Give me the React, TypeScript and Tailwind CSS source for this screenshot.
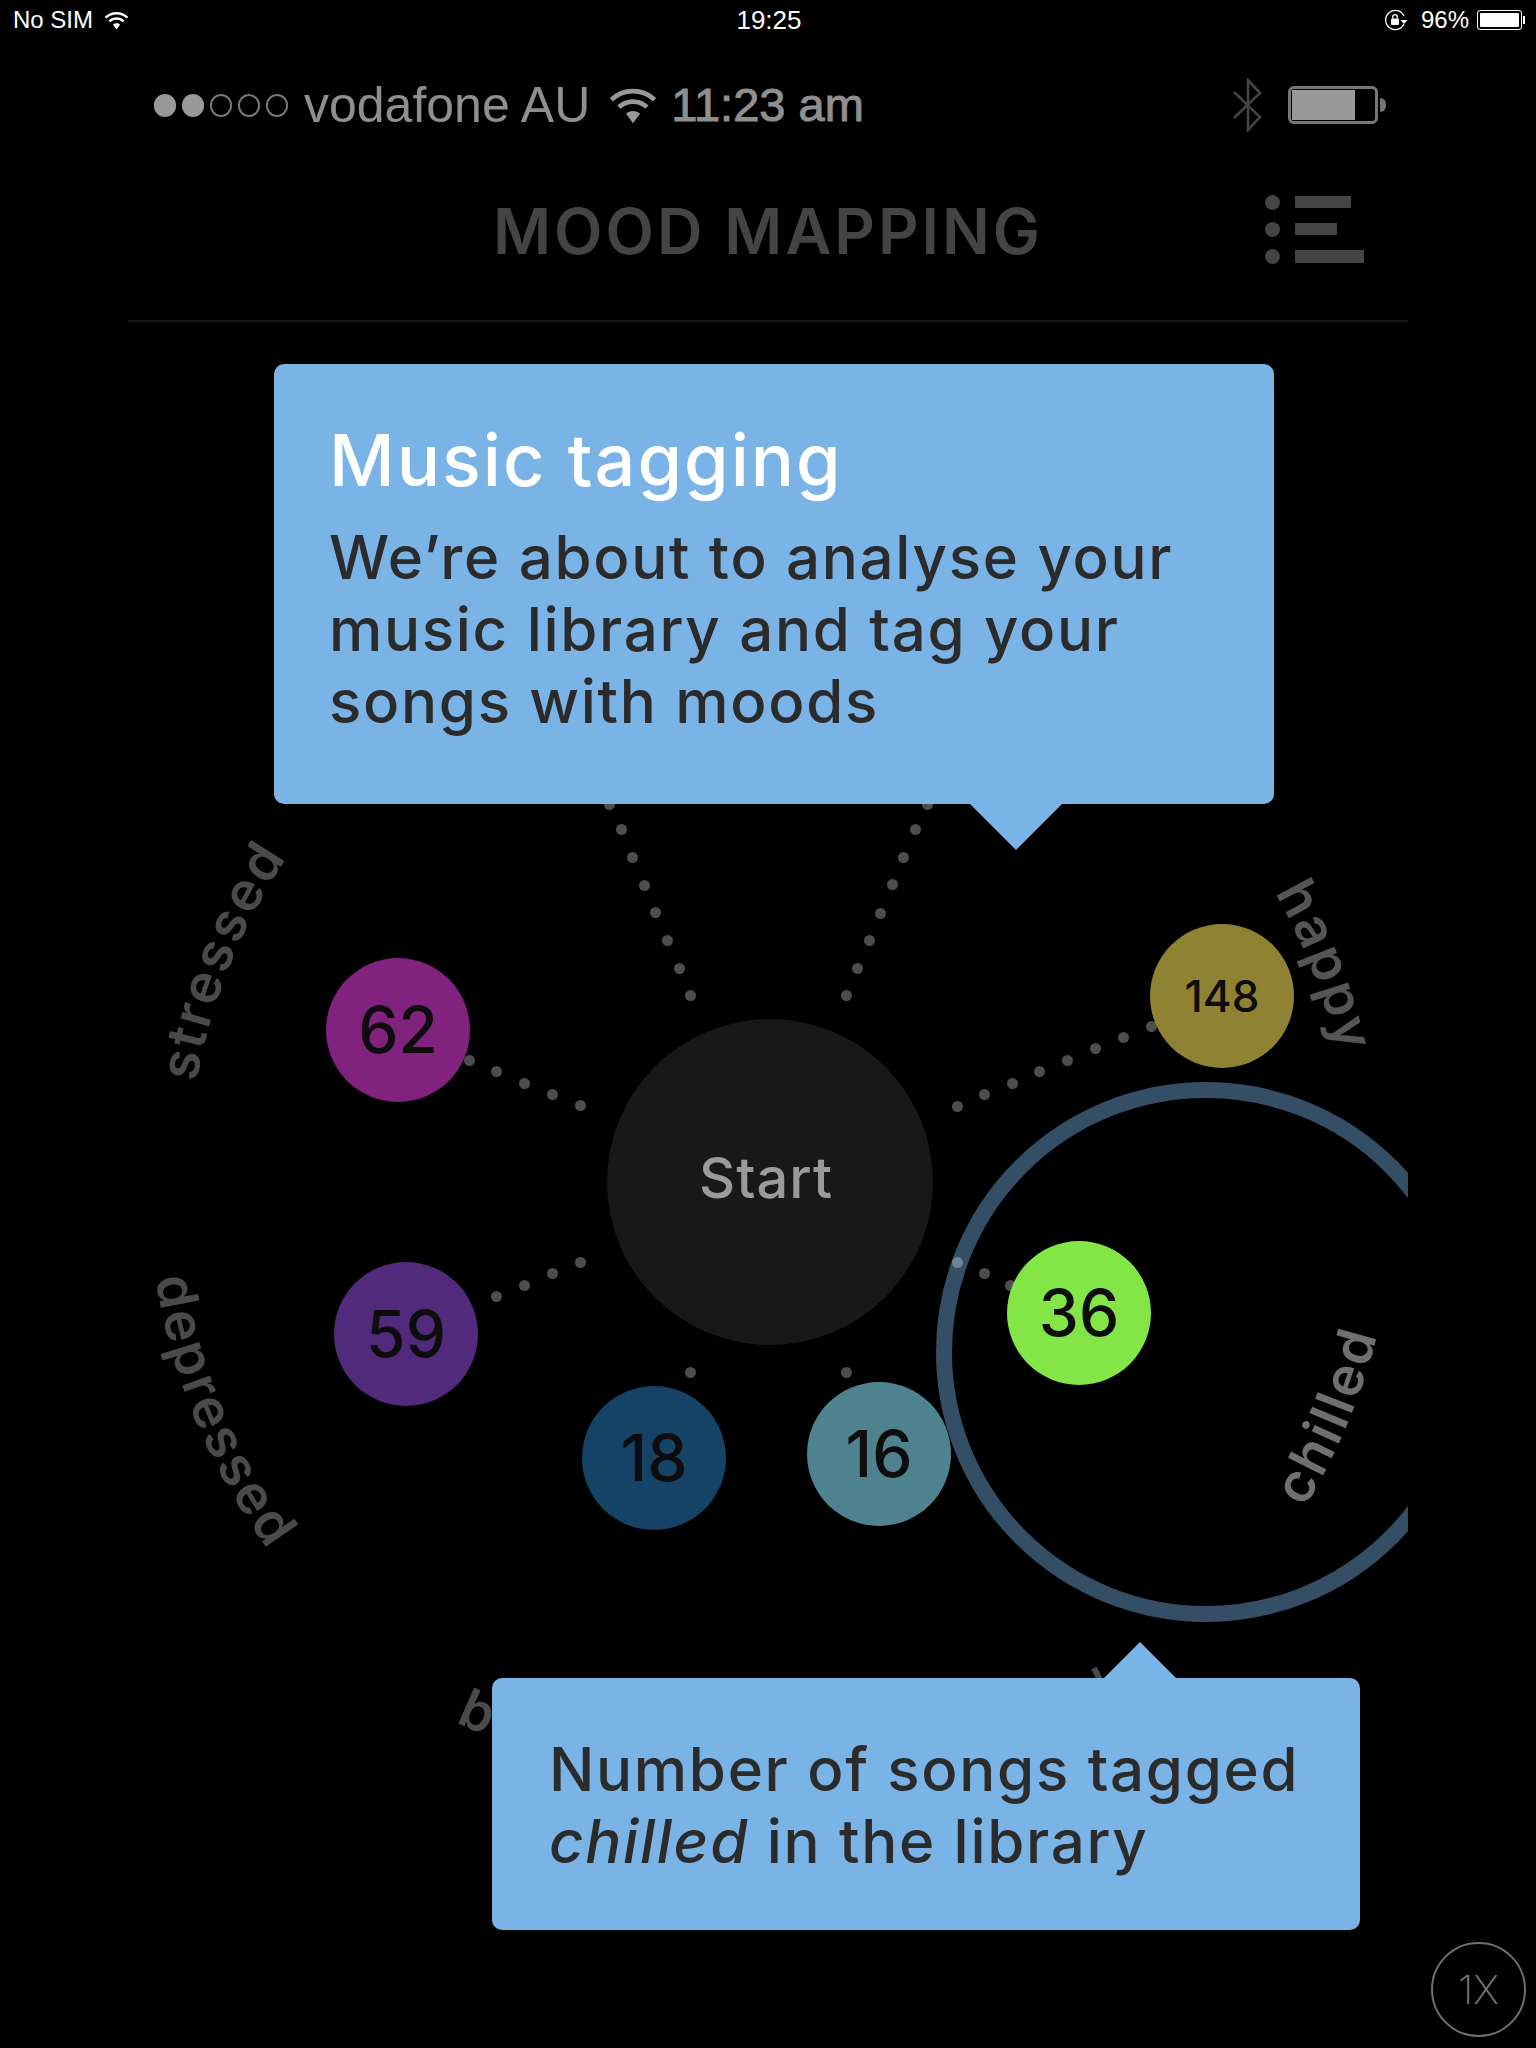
import React from "react";

const OX = 128;
const OY = 322;

const bubbles = [
  { n: "62", x: 398, y: 1030, bg: "#82227f", size: "text-[64px]" },
  { n: "59", x: 406, y: 1334, bg: "#522a7c", size: "text-[64px]" },
  { n: "18", x: 654, y: 1458, bg: "#144366", size: "text-[64px]" },
  { n: "16", x: 879, y: 1454, bg: "#4f828f", size: "text-[64px]" },
  { n: "36", x: 1079, y: 1313, bg: "#83e646", size: "text-[64px]" },
  { n: "148", x: 1222, y: 996, bg: "#8f8233", size: "text-[44px]" },
];

const dots: [number, number][] = [
  [609, 804], [621, 829], [632, 857], [644, 885], [655, 912], [667, 940], [679, 968], [690, 995],
  [469, 1060], [496, 1071], [524, 1083], [552, 1094], [580, 1105],
  [496, 1296], [524, 1285], [552, 1273], [580, 1262],
  [690, 1372], [846, 1372],
  [927, 804], [915, 829], [903, 857], [892, 884], [880, 913], [869, 940], [857, 968], [846, 995],
  [1151, 1026], [1123, 1037], [1095, 1048], [1067, 1060], [1039, 1071], [1012, 1083], [984, 1094], [957, 1106],
  [957, 1262], [984, 1273], [1010, 1285],
];

function Wifi({ className, color }: { className: string; color: string }) {
  return (
    <svg viewBox="0 0 24 18" className={className} fill="none">
      <path d="M1.5 6.2C7.3 0.6 16.7 0.6 22.5 6.2" stroke={color} strokeWidth="2.3" />
      <path d="M5.2 9.8C9 6.2 15 6.2 18.8 9.8" stroke={color} strokeWidth="2.3" />
      <path d="M8.6 13C10.5 11.3 13.5 11.3 15.4 13L12 17.6Z" fill={color} />
    </svg>
  );
}

function Label() {
  const cx = 770 - OX;
  const cy = 1182 - OY;
  const outer = 582;
  const inner = 622;
  const chilled = 626;
  const cw = (r: number) => `M${cx - r} ${cy}A${r} ${r} 0 1 1 ${cx + r} ${cy}A${r} ${r} 0 1 1 ${cx - r} ${cy}`;
  const ccw = (r: number) => `M${cx - r} ${cy}A${r} ${r} 0 1 0 ${cx + r} ${cy}A${r} ${r} 0 1 0 ${cx - r} ${cy}`;
  return (
    <svg className="absolute left-0 top-0 w-[1280px] h-[1726px] font-['Inter',sans-serif] font-semibold text-[54px] tracking-[2.5px]">
      <defs>
        <path id="arc-out" d={cw(outer)} />
        <path id="arc-in" d={ccw(inner)} />
        <path id="arc-chilled" d={ccw(chilled)} />
      </defs>
      <text fill="#4a4a4a" textAnchor="middle">
        <textPath href="#arc-out" startOffset="6.1%">stressed</textPath>
      </text>
      <text fill="#555555" textAnchor="middle">
        <textPath href="#arc-out" startOffset="44.1%">happy</textPath>
      </text>
      <text fill="#4a4a4a" textAnchor="middle">
        <textPath href="#arc-in" startOffset="6.3%">depressed</textPath>
      </text>
      <text fill="#707070" textAnchor="middle">
        <textPath href="#arc-chilled" startOffset="43.7%">chilled</textPath>
      </text>
      <text fill="#4a4a4a" transform={`translate(${455 - OX} ${1722 - OY}) rotate(24)`}>b</text>
      <path d={`M${1094 - OX} ${1668 - OY}L${1100 - OX} ${1680 - OY}`} stroke="#4a4a4a" strokeWidth="6" />
    </svg>
  );
}

export default function App() {
  return (
    <div className="relative w-[1536px] h-[2048px] bg-black overflow-hidden font-['Liberation_Sans',sans-serif]">
      {/* device status bar */}
      <div className="grid grid-cols-3 items-center h-[40px] pl-[13px] pr-[11px] text-white text-[24px]">
        <div className="flex items-center gap-[11px]">
          <span>No SIM</span>
          <Wifi className="w-[25px] h-[19px]" color="#ffffff" />
        </div>
        <div className="text-center text-[26px]">19:25</div>
        <div className="flex items-center justify-end">
          <svg viewBox="0 0 24 22" className="w-[24px] h-[22px] mr-[13px]" fill="none">
            <path d="M20 15A9.6 9.6 0 1 1 20 7" stroke="#fff" strokeWidth="1.3" />
            <path d="M16.5 11h7L20 15Z" fill="#fff" />
            <rect x="7" y="9.5" width="8" height="6.5" rx="1" fill="#fff" />
            <path d="M8.8 9.5V7.8a2.2 2.2 0 0 1 4.4 0V9.5" stroke="#fff" strokeWidth="1.3" />
          </svg>
          <span>96%</span>
          <div className="ml-[8px] w-[45px] h-[20px] rounded-[3px] border border-white p-[2px]">
            <div className="w-full h-full bg-white rounded-[1px]" />
          </div>
          <div className="ml-[1px] w-[2px] h-[8px] bg-white" />
        </div>
      </div>

      {/* app frame */}
      <div className="w-[1280px] ml-[128px]">
        {/* app status bar */}
        <div className="flex items-center h-[130px] pl-[26px] pr-[22px] text-[#8f8f8f]">
          <div className="flex gap-[6px]">
            <div className="w-[22px] h-[23px] rounded-full bg-[#999999]" />
            <div className="w-[22px] h-[23px] rounded-full bg-[#999999]" />
            <div className="w-[22px] h-[23px] rounded-full border-2 border-[#777777]" />
            <div className="w-[22px] h-[23px] rounded-full border-2 border-[#777777]" />
            <div className="w-[22px] h-[23px] rounded-full border-2 border-[#777777]" />
          </div>
          <span className="ml-[16px] text-[50px]">vodafone AU</span>
          <Wifi className="ml-[18px] w-[50px] h-[37px]" color="#999999" />
          <span className="ml-[13px] text-[47px] [-webkit-text-stroke:1px_#8f8f8f]">11:23 am</span>
          <svg viewBox="0 0 30 54" className="ml-auto w-[30px] h-[54px]" fill="none">
            <path d="M1 14L27 39L15 52V2L27 15L1 40" stroke="#444444" strokeWidth="2.6" />
          </svg>
          <div className="ml-[25px] w-[90px] h-[38px] rounded-[6px] border-[3px] border-[#777777] p-[1px]">
            <div className="w-[63px] h-full bg-[#999999]" />
          </div>
          <div className="ml-[2px] w-[6px] h-[14px] rounded-r-full bg-[#777777]" />
        </div>

        {/* title bar */}
        <div className="grid grid-cols-[1fr_auto_1fr] items-center h-[152px] pb-[28px] border-b-2 border-[#1a1a1a]">
          <div />
          <h1 className="text-[63px] leading-none font-semibold tracking-[3px] text-[#444444] font-['Inter',sans-serif] whitespace-nowrap">
            MOOD MAPPING
          </h1>
          <div className="justify-self-end mr-[44px] mb-[4px] grid grid-cols-[15px_69px] gap-x-[15px] gap-y-[12px] items-center">
            <div className="w-[15px] h-[15px] rounded-full bg-[#444444]" />
            <div className="w-[56px] h-[12px] bg-[#444444]" />
            <div className="w-[15px] h-[15px] rounded-full bg-[#444444]" />
            <div className="w-[42px] h-[12px] bg-[#444444]" />
            <div className="w-[15px] h-[15px] rounded-full bg-[#444444]" />
            <div className="w-[69px] h-[13px] bg-[#444444]" />
          </div>
        </div>

        {/* mood map */}
        <div className="relative w-[1280px] h-[1726px] overflow-hidden">
          <Label />
          <div className="absolute left-[808px] top-[760px] w-[540px] h-[540px] rounded-full border-[16px] border-[#344e66]" />
          <div
            className="absolute w-[326px] h-[326px] rounded-full bg-[#181818] flex items-center justify-center left-[479px] top-[697px] text-[56px] font-medium tracking-[1px] text-[#9a9a9a] font-['Inter',sans-serif]"
          >
            <span className="-translate-x-[4px] -translate-y-[4px]">Start</span>
          </div>
          {dots.map(([x, y], i) => (
            <div
              key={i}
              className="absolute w-[11px] h-[11px] rounded-full bg-[#ffffff4d]"
              style={{ left: x - OX - 5.5, top: y - OY - 5.5 }}
            />
          ))}
          {bubbles.map((b) => (
            <div
              key={b.n}
              className={`absolute w-[144px] h-[144px] rounded-full flex items-center justify-center font-medium text-[#0d0d0d] font-['Inter',sans-serif] ${b.size}`}
              style={{ left: b.x - OX - 72, top: b.y - OY - 72, backgroundColor: b.bg }}
            >
              {b.n}
            </div>
          ))}
        </div>
      </div>

      {/* top coach mark */}
      <div className="absolute left-[274px] top-[364px] w-[1000px] h-[440px] rounded-[10px] bg-[#7ab3e5] pl-[55px] pt-[46px] font-['Inter',sans-serif]">
        <div className="text-[72px] leading-[100px] font-medium tracking-[2px] text-white">Music tagging</div>
        <div className="mt-[11px] text-[60px] leading-[72px] font-medium tracking-[1.7px] text-[#2b2b2b] whitespace-nowrap">
          <div>We’re about to analyse your</div>
          <div>music library and tag your</div>
          <div>songs with moods</div>
        </div>
        <div className="absolute left-[696px] top-[440px] w-[92px] h-[46px] bg-[#7ab3e5] [clip-path:polygon(0_0,100%_0,50%_100%)]" />
      </div>

      {/* bottom coach mark */}
      <div className="absolute left-[492px] top-[1678px] w-[868px] h-[252px] rounded-[10px] bg-[#7ab3e5] pl-[57px] pt-[55px] font-['Inter',sans-serif]">
        <div className="text-[60px] leading-[72px] font-medium tracking-[1.7px] text-[#2b2b2b] whitespace-nowrap">
          <div>Number of songs tagged</div>
          <div><em>chilled</em> in the library</div>
        </div>
        <div className="absolute left-[612px] -top-[36px] w-[72px] h-[36px] bg-[#7ab3e5] [clip-path:polygon(50%_0,100%_100%,0_100%)]" />
      </div>

      {/* speed control */}
      <div className="absolute left-[1431px] top-[1942px] w-[95px] h-[95px] rounded-full border-2 border-[#707070] flex items-center justify-center text-[40px] font-extralight text-[#777777] font-['Inter',sans-serif]">
        1X
      </div>
    </div>
  );
}
